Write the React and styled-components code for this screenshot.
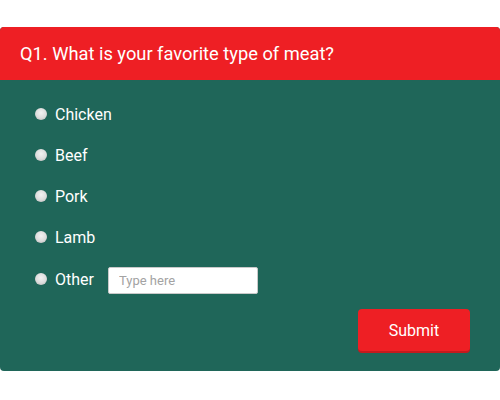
import React from 'react'
import styled, { createGlobalStyle } from 'styled-components'

const GlobalStyle = createGlobalStyle`
  body {
    margin: 0;
    background: #fff;
    font-family: Roboto, "Liberation Sans", sans-serif;
  }
`

const options = ['Chicken', 'Beef', 'Pork', 'Lamb']

const App = () => {
  return (
    <>
      <GlobalStyle />
      <Page>
        <Card>
          <Header>Q1. What is your favorite type of meat?</Header>
          <Body>
            {options.map((o) => (
              <Row key={o}>
                <Radio />
                <Label>{o}</Label>
              </Row>
            ))}
            <Row $last>
              <Radio />
              <Label>Other</Label>
              <TextInput type="text" placeholder="Type here" />
            </Row>
            <Footer>
              <Submit>Submit</Submit>
            </Footer>
          </Body>
        </Card>
      </Page>
    </>
  )
}

export default App

const Page = styled.div`
  padding-top: 27px;
  width: 500px;
`

const Card = styled.div`
  width: 500px;
  border-radius: 4px;
  overflow: hidden;
  background: #1f6659;
`

const Header = styled.div`
  height: 53px;
  background: #ee1f24;
  color: #fff;
  font-size: 18.3px;
  display: flex;
  align-items: center;
  padding-left: 20px;
`

const Body = styled.div`
  padding: 14px 30px 20px 35px;
`

const Row = styled.div`
  height: 41px;
  display: flex;
  align-items: center;
  margin-top: ${(p) => (p.$last ? '1px' : '0')};
`

const Radio = styled.span`
  width: 12px;
  height: 12px;
  border-radius: 50%;
  background: radial-gradient(circle at 50% 40%, #f2f2f2 0%, #dcdcdc 55%, #b0b0b0 100%);
  margin-right: 8px;
  margin-top: -2px;
`

const Label = styled.span`
  color: #fff;
  font-size: 16px;
`

const TextInput = styled.input`
  margin-left: 14px;
  margin-top: 2px;
  width: 150px;
  height: 27px;
  box-sizing: border-box;
  border: 1px solid #c9c9c9;
  border-radius: 2px;
  padding: 0 10px;
  font-family: Roboto, "Liberation Sans", sans-serif;
  font-size: 13px;
  outline: none;
  &::placeholder {
    color: #a3a3a3;
  }
`

const Footer = styled.div`
  display: flex;
  justify-content: flex-end;
  margin-top: 9px;
`

const Submit = styled.button`
  width: 112px;
  height: 42px;
  border: none;
  border-radius: 4px;
  background: #ee1f24;
  box-shadow: 0 2px 0 #c31a1e;
  color: #fff;
  font-family: Roboto, "Liberation Sans", sans-serif;
  font-size: 16px;
  cursor: pointer;
`
